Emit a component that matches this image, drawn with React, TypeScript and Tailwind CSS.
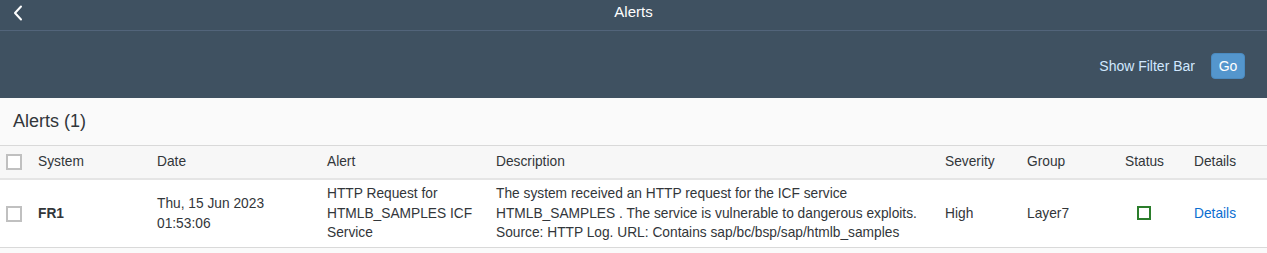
import React from "react";

const font = { fontFamily: '"Liberation Sans", Arial, sans-serif' };

function Checkbox() {
  return <div className="w-[16px] h-[16px] border-2 border-[#c0c0c0] bg-white" />;
}

export default function App() {
  return (
    <div className="w-[1267px] h-[253px] bg-[#fafafa] text-[#32363a] text-[14px]" style={font}>
      <div className="bg-[#3f5161]">
        <div className="h-[31px] relative flex items-center justify-center border-b border-[#52647a]">
          <button className="absolute left-[10px] top-[3px] w-[16px] h-[20px] flex items-center justify-center text-white">
            <svg width="10" height="16" viewBox="0 0 10 16">
              <path d="M8 1.5 L2 8 L8 14.5" fill="none" stroke="white" strokeWidth="2" strokeLinecap="round" strokeLinejoin="round" />
            </svg>
          </button>
          <span className="text-white text-[15px] mt-[-6px]">Alerts</span>
        </div>
        <div className="h-[67px] flex items-center justify-end pr-[22px] pt-[3px] gap-[16px]">
          <span className="text-[#d1e8ff] text-[14px]">Show Filter Bar</span>
          <button className="bg-[#5496cd] text-white rounded-[4px] w-[34px] h-[26px] text-[14px] border border-[#4a8ac0]">Go</button>
        </div>
      </div>
      <div className="h-[48px] flex items-center px-[13px] border-b border-[#d9d9d9]">
        <span className="text-[18px]">Alerts (1)</span>
      </div>
      <div className="bg-[#f7f7f7] h-[34px] flex items-center border-b-2 border-[#e5e5e5] text-[#32363a] text-[13.75px]">
        <div className="w-[38px] pl-[6px]"><Checkbox /></div>
        <div className="w-[119px]">System</div>
        <div className="w-[170px]">Date</div>
        <div className="w-[169px]">Alert</div>
        <div className="w-[449px]">Description</div>
        <div className="w-[82px]">Severity</div>
        <div className="w-[98px]">Group</div>
        <div className="w-[69px]">Status</div>
        <div>Details</div>
      </div>
      <div className="bg-white h-[68px] flex items-center border-b border-[#d9d9d9] leading-[19.5px] text-[13.75px]">
        <div className="w-[38px] pl-[6px]"><Checkbox /></div>
        <div className="w-[119px] font-bold">FR1</div>
        <div className="w-[170px]">Thu, 15 Jun 2023<br />01:53:06</div>
        <div className="w-[169px]">HTTP Request for<br />HTMLB_SAMPLES ICF<br />Service</div>
        <div className="w-[449px]">
          The system received an HTTP request for the ICF service<br />
          HTMLB_SAMPLES . The service is vulnerable to dangerous exploits.<br />
          Source: HTTP Log. URL: Contains sap/bc/bsp/sap/htmlb_samples
        </div>
        <div className="w-[82px]">High</div>
        <div className="w-[98px]">Layer7</div>
        <div className="w-[69px] pl-[12px]"><div className="w-[14px] h-[14px] border-2 border-[#2b7d2b] mt-[-2px]" /></div>
        <div className="text-[#0a6ed1]">Details</div>
      </div>
    </div>
  );
}
